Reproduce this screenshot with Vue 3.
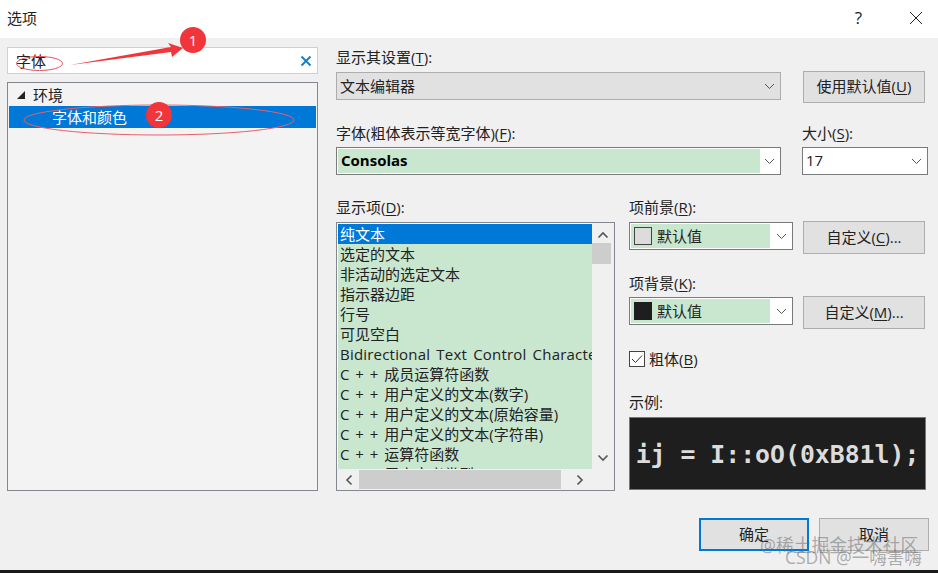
<script setup>
const items = [
  { t: '选定的文本' }, { t: '非活动的选定文本' }, { t: '指示器边距' }, { t: '行号' }, { t: '可见空白' },
  { t: 'Bidirectional Text Control Characters', latin: true }, { t: 'C + + 成员运算符函数' }, { t: 'C + + 用户定义的文本(数字)' },
  { t: 'C + + 用户定义的文本(原始容量)' }, { t: 'C + + 用户定义的文本(字符串)' }, { t: 'C + + 运算符函数' }, { t: 'C + + 用户定义类型' }
]
</script>

<template>
  <div class="dialog">
    <header class="title">
      <span class="title-text">选项</span>
      <span class="help">?</span>
      <svg class="close" width="14" height="14" viewBox="0 0 14 14"><path d="M1 1l12 12M13 1L1 13" stroke="#222" fill="none" /></svg>
    </header>
    <main class="body">
      <aside class="left">
        <div class="search">
          <span>字体</span>
          <svg width="12" height="12" viewBox="0 0 12 12"><path d="M1.5 1.5l9 9M10.5 1.5l-9 9" stroke="#1c7fc4" stroke-width="2" fill="none" /></svg>
        </div>
        <div class="tree">
          <div class="tree-root"><i class="tri"></i>环境</div>
          <div class="tree-sel">字体和颜色</div>
        </div>
      </aside>
      <section class="right">
        <div class="top-grid">
          <label class="lbl">显示其设置(<u>T</u>):</label>
          <span></span>
          <div class="combo gray">
            <span class="combo-val">文本编辑器</span>
            <svg class="chev" width="11" height="7" viewBox="0 0 11 7"><path d="M1 1l4.5 4.5L10 1" stroke="#555" fill="none" /></svg>
          </div>
          <button class="btn top-btn">使用默认值(<u>U</u>)</button>
          <label class="lbl second">字体(粗体表示等宽字体)(<u>F</u>):</label>
          <label class="lbl second">大小(<u>S</u>):</label>
          <div class="combo white">
            <span class="fill consolas">Consolas</span>
            <svg class="chev" width="11" height="7" viewBox="0 0 11 7"><path d="M1 1l4.5 4.5L10 1" stroke="#555" fill="none" /></svg>
          </div>
          <div class="combo white size">
            <span class="combo-val">17</span>
            <svg class="chev" width="11" height="7" viewBox="0 0 11 7"><path d="M1 1l4.5 4.5L10 1" stroke="#555" fill="none" /></svg>
          </div>
        </div>
        <div class="lower">
          <div class="list-col">
            <label class="lbl">显示项(<u>D</u>):</label>
            <div class="list">
              <div class="list-view">
                <div class="row sel">纯文本</div>
                <div v-for="it in items" :key="it.t" class="row" :class="{ latin: it.latin }">{{ it.t }}</div>
              </div>
              <div class="vbar">
                <svg width="12" height="8" viewBox="0 0 12 8"><path d="M1.5 6.5L6 2l4.5 4.5" stroke="#555" stroke-width="1.6" fill="none" /></svg>
                <div class="vtrack"><div class="vthumb"></div></div>
                <svg width="12" height="8" viewBox="0 0 12 8"><path d="M1.5 1.5L6 6l4.5-4.5" stroke="#555" stroke-width="1.6" fill="none" /></svg>
              </div>
              <div class="hbar">
                <svg width="8" height="12" viewBox="0 0 8 12"><path d="M6.5 1.5L2 6l4.5 4.5" stroke="#555" stroke-width="1.6" fill="none" /></svg>
                <div class="hthumb"></div>
                <svg width="8" height="12" viewBox="0 0 8 12"><path d="M1.5 1.5L6 6l-4.5 4.5" stroke="#555" stroke-width="1.6" fill="none" /></svg>
              </div>
            </div>
          </div>
          <div class="props">
            <label class="lbl">项前景(<u>R</u>):</label>
            <div class="pair">
              <div class="combo white color">
                <span class="fill short"><i class="swatch light"></i>默认值</span>
                <svg class="chev" width="11" height="7" viewBox="0 0 11 7"><path d="M1 1l4.5 4.5L10 1" stroke="#555" fill="none" /></svg>
              </div>
              <button class="btn">自定义(<u>C</u>)...</button>
            </div>
            <label class="lbl back-lbl">项背景(<u>K</u>):</label>
            <div class="pair back-pair">
              <div class="combo white color">
                <span class="fill short"><i class="swatch dark"></i>默认值</span>
                <svg class="chev" width="11" height="7" viewBox="0 0 11 7"><path d="M1 1l4.5 4.5L10 1" stroke="#555" fill="none" /></svg>
              </div>
              <button class="btn">自定义(<u>M</u>)...</button>
            </div>
            <div class="check">
              <svg width="16" height="16" viewBox="0 0 16 16"><rect x=".5" y=".5" width="15" height="15" fill="#fff" stroke="#444" /><path d="M3 8l3.5 3.5L13 4.5" stroke="#333" fill="none" /></svg>
              <span>粗体(<u>B</u>)</span>
            </div>
            <label class="lbl sample-lbl">示例:</label>
            <div class="sample">ij = I::oO(0xB81l);</div>
          </div>
        </div>
      </section>
    </main>
    <footer class="foot">
      <button class="btn ok">确定</button>
      <button class="btn cancel">取消</button>
    </footer>
    <div class="strip"></div>

    <svg class="marks" width="938" height="573" viewBox="0 0 938 573">
      <ellipse cx="39.5" cy="63.5" rx="23" ry="7" fill="none" stroke="#e8505a" />
      <ellipse cx="159" cy="120" rx="135" ry="15" fill="none" stroke="#e8606a" />
      <path d="M70 65L171 47l-3-4 15 5-11 9-1-5z" fill="#f0353b" />
      <circle cx="193" cy="40" r="13" fill="#f0353b" />
      <circle cx="159" cy="115" r="13" fill="#f0353b" />
    </svg>
    <span class="badge b1">1</span>
    <span class="badge b2">2</span>
    <div class="wm wm1">@稀土掘金技术社区</div>
    <div class="wm wm2">CSDN @一嗨害嗨</div>
  </div>
</template>

<style scoped>
.dialog {
  position: relative;
  width: 938px;
  height: 573px;
  overflow: hidden;
  background: #f0f0f0;
  display: flex;
  flex-direction: column;
  font: 15px/20px "Open Sans", "Noto Sans CJK SC", sans-serif;
  color: #222;
}
u { text-underline-offset: 2px; }
.title {
  height: 38px;
  box-sizing: border-box;
  padding: 0 0 2px 7px;
  flex: none;
  background: #fff;
  display: flex;
  align-items: center;
}
.title-text { flex: 1; }
.help { font-size: 17px; margin-right: 47px; }
.close { margin-right: 15px; }
.body { display: flex; flex: 1; min-height: 0; }
.left { width: 311px; margin-left: 7px; padding-top: 9px; flex: none; }
.search {
  height: 27px;
  box-sizing: border-box;
  background: #fff;
  border: 1px solid #d0d0d0;
  display: flex;
  align-items: center;
  justify-content: space-between;
  padding: 0 5px 0 8px;
}
.tree {
  margin-top: 8px;
  height: 409px;
  box-sizing: border-box;
  border: 1px solid #828790;
  background: #f3f3f3;
  padding: 2px 1px;
}
.tree-root { height: 20px; margin-bottom: 1px; padding-left: 8px; display: flex; align-items: center; gap: 8px; }
.tri { width: 0; height: 0; border-left: 8px solid transparent; border-bottom: 8px solid #222; }
.tree-sel { height: 22px; line-height: 22px; background: #0078d7; color: #fff; padding-left: 43px; }
.right { margin-left: 18px; width: 600px; flex: none; }
.top-grid {
  display: grid;
  grid-template-columns: 445px 126px;
  column-gap: 21px;
  padding-top: 9px;
  align-items: start;
}
.lbl { display: block; height: 20px; }
.top-grid .lbl:first-child { margin-bottom: 5px; }
.second { margin-top: 20px; margin-bottom: 4px; }
.combo {
  box-sizing: border-box;
  height: 28px;
  border: 1px solid #7a7a7a;
  display: flex;
  align-items: center;
  position: relative;
}
.gray { background: #e1e1e1; border-color: #adadad; }
.white { background: #fff; }
.combo-val { padding-left: 3px; flex: 1; }
.size .combo-val { padding-bottom: 2px; }
.chev { position: absolute; right: 5px; top: 10px; }
.fill {
  align-self: stretch;
  margin: 1px;
  background: #c9e6cf;
  display: flex;
  align-items: center;
}
.consolas { width: 422px; padding: 0 0 2px 3px; box-sizing: border-box; font: bold 15px "Open Sans", sans-serif; color: #000; }
.size { width: 126px; }
.btn {
  font: inherit;
  color: #222;
  background: #e1e1e1;
  border: 1px solid #adadad;
  padding: 0 0 2px;
  width: 122px;
  height: 33px;
}
.top-btn { margin: -1px 0 0 1px; height: 32px; }
.lower { display: flex; margin-top: 22px; }
.list-col { width: 279px; margin-right: 14px; flex: none; }
.list {
  margin-top: 5px;
  width: 279px;
  height: 269px;
  box-sizing: border-box;
  border: 1px solid #828790;
  background: #f0f0f0;
  display: grid;
  grid-template-columns: 255px 22px;
  grid-template-rows: 246px 21px;
}
.list-view { padding: 1px 0 0 1px; height: 245px; overflow: hidden; background: #fff; }
.row { height: 20px; background: #c9e6cf; padding-left: 2px; white-space: nowrap; overflow: hidden; word-spacing: 2px; }
.latin { letter-spacing: 0.2px; }
.sel { background: #0078d7; color: #fff; }
.vbar { display: flex; flex-direction: column; align-items: center; justify-content: space-between; padding: 8px 0 7px; }
.vtrack { flex: 1; width: 100%; padding-top: 4px; }
.vthumb { height: 21px; width: 19px; background: #cdcdcd; }
.hbar { grid-column: 1 / 3; display: flex; align-items: center; padding: 0 30px 0 8px; }
.hthumb { width: 202px; height: 19px; background: #cdcdcd; margin: 0 auto 0 6px; }
.props { width: 297px; flex: none; }
.pair { display: flex; align-items: flex-start; gap: 10px; margin-top: 4px; }
.back-pair { margin-top: 3px; }
.color { width: 164px; margin-top: 1px; }
.short { width: 139px; padding-left: 3px; box-sizing: border-box; gap: 5px; }
.swatch { width: 18px; height: 18px; box-sizing: border-box; display: block; }
.light { background: #dcdcdc; border: 1px solid #444; }
.dark { background: #1e1e1e; }
.back-lbl { margin-top: 19px; }
.check { display: flex; align-items: center; gap: 4px; margin-top: 20px; }
.sample-lbl { margin-top: 23px; }
.sample {
  margin-top: 5px;
  width: 297px;
  height: 73px;
  box-sizing: border-box;
  background: #1e1e1e;
  border: 1px solid #777;
  color: #dcdcdc;
  font: bold 24.8px/73px "DejaVu Sans Mono", monospace;
  text-align: center;
  white-space: nowrap;
  overflow: hidden;
}
.foot {
  position: absolute;
  right: 9px;
  top: 518px;
  display: flex;
  gap: 10px;
}
.ok, .cancel { width: 110px; height: 33px; }
.ok { border: 2px solid #0078d7; }
.strip { position: absolute; left: 0; right: 0; bottom: 0; height: 3px; background: #1a1a1a; }
.marks { position: absolute; left: 0; top: 0; pointer-events: none; }
.badge { position: absolute; color: #fff; font-size: 15px; width: 26px; text-align: center; }
.b1 { left: 180px; top: 30px; }
.b2 { left: 146px; top: 105px; }
.wm { position: absolute; color: rgba(110, 110, 110, 0.55); white-space: nowrap; }
.wm1 { left: 760px; top: 535px; font-size: 17.8px; }
.wm2 { left: 785px; top: 547px; font-size: 17.5px; }
</style>

<style>
html, body { margin: 0; background: #f0f0f0; }
</style>
